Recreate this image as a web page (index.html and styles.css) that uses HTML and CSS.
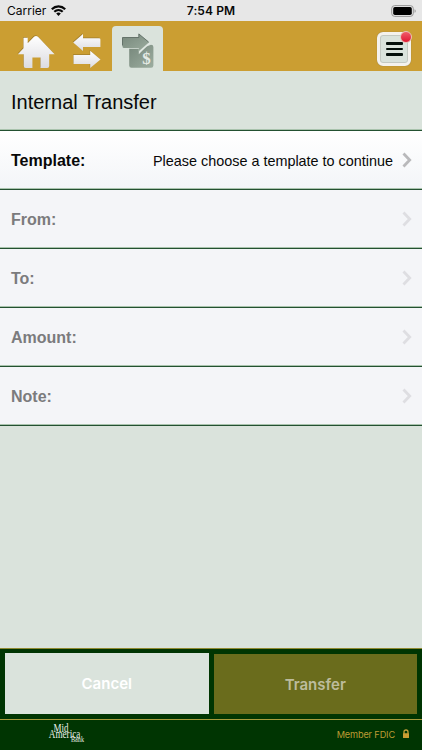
FILE: index.html
```html
<!DOCTYPE html>
<html lang="en">
<head>
  <meta charset="UTF-8" />
  <meta name="viewport" content="width=device-width, initial-scale=1" />
  <title>Internal Transfer</title>
  <link rel="stylesheet" href="styles.css">
</head>
<body>
  <!-- Status bar -->
  <div class="status">
    <div class="carrier">
      <span>Carrier</span>
      <svg width="15" height="11" viewBox="0 0 15 11">
        <g fill="none" stroke="#080808" stroke-width="2.2">
          <path d="M.8 4.2C4.6.4 10.4.4 14.2 4.2" />
          <path d="M3.3 6.8c2.4-2.3 6-2.3 8.4 0" />
        </g>
        <path d="M5.2 8.5c1.4-1.2 3.2-1.2 4.6 0L7.5 10.9z" fill="#080808" />
      </svg>
    </div>
    <span class="time">7:54 PM</span>
    <svg class="battery" width="26" height="12" viewBox="0 0 26 12">
      <rect x=".7" y=".6" width="21.6" height="10.8" rx="3" fill="none" stroke="#969696" />
      <rect x="2.2" y="2.1" width="18.6" height="7.8" rx="1.7" fill="#000" />
      <path d="M23.6 4.2c1.4.5 1.4 3.1 0 3.6z" fill="#8a8a8a" />
    </svg>
  </div>

  <!-- Navigation -->
  <nav class="nav">
    <svg class="home" width="39" height="34" viewBox="0 0 39 34">
      <defs>
        <linearGradient id="silver" x1="0" y1="0" x2="0" y2="1">
          <stop offset="0" stop-color="#fff" />
          <stop offset="1" stop-color="#dcdce1" />
        </linearGradient>
        <linearGradient id="sage" x1="0" y1="0" x2="1" y2="1">
          <stop offset="0" stop-color="#76877b" />
          <stop offset="1" stop-color="#9cad9f" />
        </linearGradient>
      </defs>
      <path d="M6.5 2.8h4.2v5.4L17 1.8q2-1.7 4 0L37.6 19.3h-5.4v11.6q0 2-2 2h-6.7V22.4h-8.1v10.5H8.7q-2 0-2-2V19.3H.9l5.6-6z" fill="#91722b" opacity=".7" transform="translate(-.5 -.7)" />
      <path d="M6.5 2.8h4.2v5.4L17 1.8q2-1.7 4 0L37.6 19.3h-5.4v11.6q0 2-2 2h-6.7V22.4h-8.1v10.5H8.7q-2 0-2-2V19.3H.9l5.6-6z" fill="url(#silver)" />
    </svg>
    <svg class="swap" width="30" height="36" viewBox="0 0 30 36">
      <g fill="#91722b" opacity=".7" transform="translate(-.5 -.7)">
        <path d="M1.2 9.4L11 1v4.2h16q1.4 0 1.4 1.4v7.3H11v4.1z" />
        <path d="M28.5 26.6L18.2 17.8v4.2H1.5v8.6q0 .5.8.5h15.9v4z" />
      </g>
      <path d="M1.2 9.4L11 1v4.2h16q1.4 0 1.4 1.4v7.3H11v4.1z" fill="url(#silver)" />
      <path d="M28.5 26.6L18.2 17.8v4.2H1.5v8.6q0 .5.8.5h15.9v4z" fill="url(#silver)" />
    </svg>
    <div class="tab">
      <svg width="34" height="36" viewBox="0 0 34 36">
        <path d="M8.2 15.8h9.6v5.4l7.8-7.6 4.4-1.8q2.4 0 2.4 2.2v18.4q0 2.3-2.3 2.3H10.5q-2.3 0-2.3-2.3z" fill="url(#sage)" />
        <path d="M1.5 4.5h16.3V.9L28 9.3l-10.2 9v-3.3H3.1q-1.6 0-1.6-1.6z" fill="url(#sage)" />
        <path d="M18.3 19.2L29 10" fill="none" stroke="#e5ebe5" stroke-width=".9" />
        <path d="M1.5 12.5v-8h16.3V.9L27.6 9" fill="none" stroke="#526158" stroke-width=".8" />
        <text x="25.6" y="30.6" class="dollar">$</text>
      </svg>
    </div>
    <div class="menu">
      <span></span>
      <span></span>
      <span></span>
      <i class="badge"></i>
    </div>
  </nav>

  <h1>Internal Transfer</h1>

  <!-- Transfer form -->
  <main class="rows">
    <div class="row active">
      <span class="label">Template:</span>
      <span class="value">Please choose a template to continue</span>
      <svg class="arrow" width="10" height="16" viewBox="0 0 10 16"><path d="M1.5 1.5L7.7 8l-6.2 6.5" /></svg>
    </div>
    <div class="row">
      <span class="label">From:</span>
      <svg class="arrow" width="10" height="16" viewBox="0 0 10 16"><path d="M1.5 1.5L7.7 8l-6.2 6.5" /></svg>
    </div>
    <div class="row">
      <span class="label">To:</span>
      <svg class="arrow" width="10" height="16" viewBox="0 0 10 16"><path d="M1.5 1.5L7.7 8l-6.2 6.5" /></svg>
    </div>
    <div class="row">
      <span class="label">Amount:</span>
      <svg class="arrow" width="10" height="16" viewBox="0 0 10 16"><path d="M1.5 1.5L7.7 8l-6.2 6.5" /></svg>
    </div>
    <div class="row">
      <span class="label">Note:</span>
      <svg class="arrow" width="10" height="16" viewBox="0 0 10 16"><path d="M1.5 1.5L7.7 8l-6.2 6.5" /></svg>
    </div>
  </main>

  <div class="actions">
    <button type="button" class="cancel">Cancel</button>
    <button type="button" class="transfer">Transfer</button>
  </div>

  <footer class="footer">
    <svg class="logo" width="38" height="26" viewBox="0 0 38 26">
      <text x="5.5" y="10.6" font-size="11.5" textLength="15" lengthAdjust="spacingAndGlyphs">Mid</text>
      <text x=".8" y="16.8" font-size="11.5" textLength="31.5" lengthAdjust="spacingAndGlyphs">America</text>
      <text x="23" y="21.4" font-size="7.5" textLength="13" lengthAdjust="spacingAndGlyphs">Bank</text>
    </svg>
    <span class="fdic">Member FDIC</span>
    <svg class="lock" width="8" height="10" viewBox="0 0 8 10">
      <path d="M2 5V3q0-2 2-2t2 2v2" fill="none" stroke="#c3a03a" stroke-width="1.3" />
      <rect x="1" y="4.3" width="6" height="4.7" rx=".5" fill="#c99d32" />
    </svg>
  </footer>
</body>
</html>
```
FILE: styles.css
```css
* {
  box-sizing: border-box;
}

body {
  margin: 0;
  height: 750px;
  display: flex;
  flex-direction: column;
  overflow: hidden;
  background: #dae3dc;
  color: #080808;
  font-family: "Liberation Sans", Arial, sans-serif;
}

svg {
  display: block;
  flex: none;
}

/* Status bar */
.status {
  height: 21px;
  padding: 0 5px 0 7px;
  display: grid;
  grid-template-columns: 1fr auto 1fr;
  align-items: center;
  background: #e7e7e7;
  font-family: Inter, sans-serif;
  font-size: 12px;
}

.carrier {
  display: flex;
  align-items: center;
  gap: 5px;
}

.time {
  margin-right: 2px;
  font-weight: 600;
  letter-spacing: 0.1px;
}

.battery {
  justify-self: end;
}

/* Navigation */
.nav {
  height: 50px;
  padding-left: 17px;
  display: flex;
  align-items: flex-start;
  background: #cb9e32;
}

.home {
  margin-top: 14px;
}

.swap {
  margin: 12px 0 0 16px;
}

.tab {
  width: 51px;
  height: 45px;
  margin: 5px 0 0 10px;
  padding: 7px 0 0 9px;
  border-radius: 4px 4px 0 0;
  background: #dae3dc;
}

.dollar {
  fill: #e5ebe5;
  font-family: "Liberation Serif", serif;
  font-size: 17px;
  font-weight: bold;
  text-anchor: middle;
}

.menu {
  position: relative;
  width: 34px;
  height: 34px;
  margin: 11px 11px 0 auto;
  display: flex;
  flex-direction: column;
  align-items: center;
  justify-content: center;
  gap: 3px;
  border: 3px solid #f4f2ed;
  border-radius: 6px;
  background: #dae3dc;
  box-shadow: inset 0 0 0 1px #c3c9c2, 0 0 1px #7f714b;
}

.menu span {
  width: 17px;
  height: 2.4px;
  border-radius: 1px;
  background: #05100b;
}

.badge {
  position: absolute;
  top: -4px;
  right: -4px;
  width: 12px;
  height: 12px;
  border: 1px solid #e9c3b8;
  border-radius: 50%;
  background: linear-gradient(#f05d69, #e01832);
}

h1 {
  height: 59px;
  margin: 0;
  padding: 3px 0 0 11px;
  font-size: 20px;
  font-weight: normal;
  line-height: 56px;
}

/* Transfer form */
.rows {
  border-top: 1px solid #235131;
  box-shadow: 0 -1px #a9c3ad;
}

.row {
  height: 59px;
  padding: 0 10px 0 11px;
  display: flex;
  align-items: center;
  border-bottom: 1px solid #235131;
  background: #f4f5f8;
  box-shadow: inset 0 -1px #a9c3ad;
  color: #7b7b7d;
}

.row.active {
  background: linear-gradient(#fff, #f3f5f8);
  color: #080808;
}

.label {
  padding-top: 2px;
  font-size: 16px;
  font-weight: bold;
}

.value {
  margin-left: auto;
  padding-top: 2px;
  font-size: 14.4px;
}

.arrow {
  margin-left: auto;
  fill: none;
  stroke: #dedee2;
  stroke-width: 2.8;
}

.value + .arrow {
  margin-left: 9px;
  stroke: #b9b9bb;
}

/* Bottom buttons */
.actions {
  height: 71px;
  margin-top: auto;
  padding: 4px 5px 5px;
  display: flex;
  align-items: flex-end;
  gap: 5px;
  border-top: 1px solid #8f8a31;
  background: #003502;
}

.actions button {
  flex: 1;
  height: 60px;
  padding: 0;
  border: 0;
  font-family: Inter, sans-serif;
  font-size: 15px;
  font-weight: 600;
}

.actions .cancel {
  height: 61px;
  background: #dae3dc;
  color: #fff;
}

.actions .transfer {
  background: #6a6c1c;
  color: #bdbc9d;
}

.footer {
  height: 31px;
  padding: 0 12px 2px 48px;
  display: flex;
  align-items: center;
  border-top: 1px solid #a79b3c;
  background: #003502;
}

.logo {
  overflow: visible;
  fill: #e9eee7;
  font-family: "Liberation Serif", serif;
}

.fdic {
  margin-left: auto;
  color: #bd9b33;
  font-family: Inter, sans-serif;
  font-size: 9.2px;
  letter-spacing: -0.15px;
}

.lock {
  margin-left: 7px;
}
```
